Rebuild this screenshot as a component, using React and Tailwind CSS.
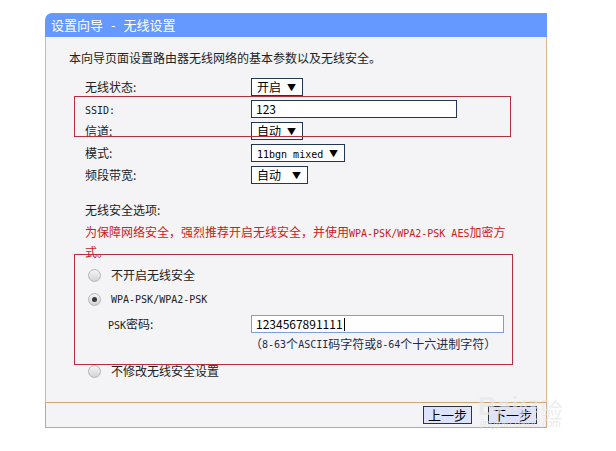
import React from 'react';

const font = "font-['Noto_Sans_CJK_SC','Noto_Sans',sans-serif]";
const mono = "font-['DejaVu_Sans_Mono','Noto_Sans_CJK_SC',monospace] text-[10px]";

const Select = ({ children, width }) => (
  <div
    className={`flex h-[18px] items-center justify-between whitespace-nowrap border border-[#22365a] bg-white pl-[5px] pr-[6px] text-[12px] leading-none text-black ${width}`}
  >
    <span>{children}</span>
    <span className="text-[9px]">▼</span>
  </div>
);

const Row = ({ label, children }) => (
  <div className="flex h-[22px] items-center">
    <div className="w-[166px] text-[12px] text-[#222]">{label}</div>
    {children}
  </div>
);

const Radio = ({ checked }) => (
  <span className="flex h-[13px] w-[13px] items-center justify-center rounded-full border border-[#b5b5b5] bg-gradient-to-b from-[#f4f4f4] to-[#d4d4d4]">
    {checked && <span className="h-[5px] w-[5px] rounded-full bg-[#3a3a3a]" />}
  </span>
);

const App = () => {
  return (
    <div className={`relative h-[451px] w-[616px] overflow-hidden bg-white ${font}`}>
      <div className="ml-[45px] pt-[13px] w-[502px]">
        {/* Header */}
        <div className="flex h-[24px] items-center rounded-tl-[7px] bg-[#6699ff] pl-[6px] text-[13px] text-white">
          设置向导<span className="mx-[8px]">-</span>无线设置
        </div>

        {/* Body */}
        <div className="border-x border-[#dcb682] bg-[#f4f4f6] pl-[23px] pt-[13px] pb-[19px]">
          <div className="flex h-[16px] items-center text-[12px] text-[#222]">
            本向导页面设置路由器无线网络的基本参数以及无线安全。
          </div>

          <div className="mt-[10px] pl-[16px]">
            <Row label="无线状态:">
              <Select width="w-[52px]">开启</Select>
            </Row>
            <Row label={<span className={mono}>SSID:</span>}>
              <div className="flex h-[18px] w-[206px] items-center border border-[#22365a] bg-white pl-[4px] text-[12px] text-black">
                123
              </div>
            </Row>
            <Row label="信道:">
              <Select width="w-[52px]">自动</Select>
            </Row>
            <Row label="模式:">
              <Select width="w-[94px]">
                <span className={mono}>11bgn mixed</span>
              </Select>
            </Row>
            <Row label="频段带宽:">
              <Select width="w-[57px]">自动</Select>
            </Row>

            <div className="mt-[16px] flex h-[16px] items-center text-[12px] text-[#222]">无线安全选项:</div>
            <div className="mt-[5px] text-[12px] leading-[18px] text-[#cc2020]">
              为保障网络安全，强烈推荐开启无线安全，并使用<span className={mono}>WPA-PSK/WPA2-PSK AES</span>加密方
              <br />
              式。
            </div>

            <div className="mt-[2px] flex h-[24px] items-center">
              <div className="ml-[3px] w-[23px]">
                <Radio />
              </div>
              <span className="text-[12px] text-[#222]">不开启无线安全</span>
            </div>
            <div className="flex h-[24px] items-center">
              <div className="ml-[3px] w-[23px]">
                <Radio checked />
              </div>
              <span className={`${mono} text-[#222]`}>WPA-PSK/WPA2-PSK</span>
            </div>
            <div className="mt-[2px] flex h-[22px] items-center pl-[23px]">
              <div className="w-[143px] text-[12px] text-[#222]">
                <span className={mono}>PSK</span>密码:
              </div>
              <div className="flex h-[18px] w-[253px] items-center border border-[#7b9fd6] bg-white pl-[4px] text-[12px] text-black">
                1234567891111<span className="ml-[1px] h-[13px] w-px bg-black" />
              </div>
            </div>
            <div className="flex h-[18px] items-center whitespace-nowrap pl-[165px] text-[12px] text-[#1e2c4c]">
              （<span className={mono}>8-63</span>个<span className={mono}>ASCII</span>码字符或<span className={mono}>8-64</span>个十六进制字符）
            </div>
            <div className="mt-[6px] flex h-[24px] items-center">
              <div className="ml-[3px] w-[23px]">
                <Radio />
              </div>
              <span className="text-[12px] text-[#222]">不修改无线安全设置</span>
            </div>
          </div>
        </div>

        {/* Footer */}
        <div className="flex h-[26px] items-center justify-end gap-[16px] border border-[#cfa672] bg-[#f4f4f6] pr-[9px]">
          <button className="flex h-[18px] w-[49px] items-center justify-center border border-[#333] bg-[#dde3ff] text-[13px] text-black">
            上一步
          </button>
          <button className="flex h-[18px] w-[49px] items-center justify-center border border-[#333] bg-[#dde3ff] text-[13px] text-black">
            下一步
          </button>
        </div>
      </div>

      {/* Annotation boxes */}
      <div className="absolute left-[74px] top-[96px] h-[41px] w-[437px] border border-[#b3303c]" />
      <div className="absolute left-[74px] top-[254px] h-[111px] w-[439px] border border-[#b3303c]" />

      {/* Watermark */}
      <div className="pointer-events-none absolute left-[478px] top-[393px] flex flex-col items-center">
        <div className="flex items-end text-[26px] font-bold leading-none text-[#e6e6e6]/70 font-['Liberation_Sans',sans-serif]">
          Bai
          <span className="text-[22px] font-normal font-['Noto_Sans_CJK_SC',sans-serif]">经验</span>
        </div>
        <div className="text-[10px] leading-none text-[#e2e2e2]/80 font-['Liberation_Sans',sans-serif]">jingyan.baidu.com</div>
      </div>
    </div>
  );
};

export default App;
